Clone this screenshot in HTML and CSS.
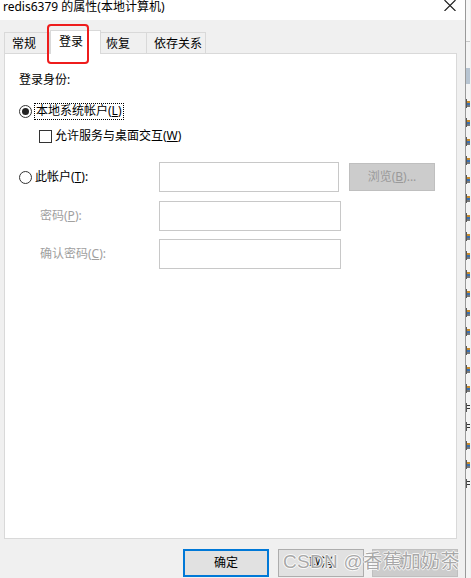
FILE: index.html
```html
<!DOCTYPE html>
<html lang="zh-CN">
<head>
<meta charset="utf-8">
<title>redis6379 的属性(本地计算机)</title>
<link rel="stylesheet" href="styles.css">
</head>
<body>
<div class="screen">
  <div class="dialog">
    <div class="titlebar">
      <span class="title">redis6379 的属性(本地计算机)</span>
      <svg class="close" width="12" height="11" viewBox="0 0 12 11"><path d="M0.5 0 L11.5 11 M11.5 0 L0.5 11" stroke="#1a1a1a" stroke-width="1.1" fill="none"/></svg>
    </div>
    <div class="body">
      <div class="tabs">
        <div class="tab tab-general">常规</div>
        <div class="tab tab-login active">登录</div>
        <div class="tab tab-recover">恢复</div>
        <div class="tab tab-deps">依存关系</div>
      </div>
      <div class="panel">
        <div class="heading">登录身份:</div>
        <div class="opt-row">
          <span class="radio checked"><span class="dot"></span></span>
          <span class="focus-label"><span>本地系统帐户(<u>L</u>)</span></span>
        </div>
        <div class="check-row">
          <span class="checkbox"></span>
          <span>允许服务与桌面交互(<u>W</u>)</span>
        </div>
        <div class="field-row first">
          <div class="field-label">
            <span class="radio"></span>
            <span>此帐户(<u>T</u>):</span>
          </div>
          <div class="input input-short"></div>
          <div class="browse"><span>浏览(<u>B</u>)...</span></div>
        </div>
        <div class="field-row second">
          <div class="field-label disabled indent"><span>密码(<u>P</u>):</span></div>
          <div class="input"></div>
        </div>
        <div class="field-row third">
          <div class="field-label disabled indent"><span>确认密码(<u>C</u>):</span></div>
          <div class="input"></div>
        </div>
      </div>
      <div class="buttons">
        <div class="btn btn-default">确定</div>
        <div class="btn btn-cancel">取消</div>
        <div class="btn btn-disabled"><span>应用(<u>A</u>)</span></div>
      </div>
    </div>
    <div class="annot"></div>
    <div class="watermark">CSDN @香蕉加奶茶</div>
  </div>
  <div class="strip">
    <div class="strip-top"></div>
    <div class="strip-band"></div>
    <div class="strip-list">
      <span class="mark"></span><span class="mark"></span><span class="mark"></span><span class="mark"></span>
      <span class="mark"></span><span class="mark"></span><span class="mark"></span><span class="mark"></span>
      <span class="mark"></span><span class="mark"></span><span class="mark"></span><span class="mark"></span>
      <span class="mark"></span><span class="mark"></span><span class="mark"></span><span class="mark"></span>
      <span class="mark alt"></span><span class="mark alt"></span><span class="mark"></span><span class="mark"></span>
      <span class="mark alt"></span>
    </div>
  </div>
</div>
</body>
</html>
```
FILE: styles.css
```css
* { box-sizing: border-box; }

html, body {
  margin: 0;
  padding: 0;
  width: 471px;
  height: 578px;
  overflow: hidden;
  background: #f0f0f0;
}

body {
  font-family: "Noto Sans", "Noto Sans CJK SC", sans-serif;
  font-size: 12px;
  color: #000;
}

u { text-decoration: underline; text-underline-offset: 1px; }

.screen {
  display: flex;
  width: 471px;
  height: 578px;
}

.dialog {
  position: relative;
  width: 466px;
  height: 578px;
  display: flex;
  flex-direction: column;
  background: #f0f0f0;
  border-right: 1px solid #9a9a9a;
}

.titlebar {
  height: 20px;
  background: #fff;
  display: flex;
  justify-content: space-between;
  align-items: flex-start;
  padding-left: 3px;
  padding-right: 9px;
}

.title {
  font-size: 12px;
  line-height: 14px;
  margin-top: 0;
  color: #000;
}

.close { display: block; margin-top: 0; }

.body {
  flex: 1;
  display: flex;
  flex-direction: column;
  padding: 10px 7px 0 4px;
}

.tabs {
  display: flex;
  align-items: flex-end;
  height: 23px;
  position: relative;
  z-index: 2;
}

.tab {
  height: 21px;
  border: 1px solid #d9d9d9;
  border-bottom: none;
  background: #f0f0f0;
  line-height: 16px;
  padding-top: 3px;
  white-space: nowrap;
}

.tab + .tab { border-left: none; }

.tab-general { width: 46px; padding-left: 7px; }
.tab-login { width: 51px; padding-left: 8px; }
.tab-recover { width: 46px; padding-left: 5px; }
.tab-deps { width: 59px; padding-left: 7px; }

.tab.active {
  height: 24px;
  margin-bottom: -1px;
  background: #fff;
  padding-top: 3px;
  border-left: 1px solid #d9d9d9;
}

.tab.active + .tab { border-left: none; }

.panel {
  height: 486px;
  width: 453px;
  background: #fff;
  border: 1px solid #d9d9d9;
  padding: 18px 0 0 14px;
  display: flex;
  flex-direction: column;
}

.heading {
  line-height: 16px;
}

.opt-row {
  margin-top: 14px;
  height: 18px;
  display: flex;
  align-items: center;
  gap: 2px;
}

.radio {
  width: 13px;
  height: 13px;
  border: 1px solid #333;
  border-radius: 50%;
  display: inline-flex;
  align-items: center;
  justify-content: center;
  background: #fff;
  flex: none;
}

.radio .dot {
  width: 7px;
  height: 7px;
  border-radius: 50%;
  background: #222;
}

.focus-label {
  border: 1px dotted #000;
  line-height: 14px;
  padding: 0 1px;
  height: 17px;
  display: inline-flex;
  align-items: center;
}

.check-row {
  margin-top: 8px;
  height: 16px;
  display: flex;
  align-items: center;
  gap: 3px;
  padding-left: 20px;
  line-height: 16px;
}

.checkbox {
  width: 13px;
  height: 13px;
  border: 1px solid #333;
  background: #fff;
  flex: none;
}

.field-row {
  display: flex;
  align-items: center;
  height: 30px;
}

.field-row.first { margin-top: 18px; }
.field-row.second { margin-top: 9px; }
.field-row.third { margin-top: 8px; }

.field-label {
  width: 140px;
  display: flex;
  align-items: center;
  gap: 3px;
  line-height: 16px;
  flex: none;
}

.field-label.indent { padding-left: 21px; }
.field-label.disabled { color: #a0a0a0; }

.input {
  width: 182px;
  height: 30px;
  border: 1px solid #c8c8c8;
  background: #fff;
  flex: none;
}

.input.input-short { width: 180px; }

.browse {
  margin-left: 10px;
  width: 86px;
  height: 28px;
  background: #cccccc;
  border: 1px solid #bfbfbf;
  color: #9a9a9a;
  display: flex;
  align-items: center;
  justify-content: center;
  line-height: 16px;
}

.buttons {
  display: flex;
  justify-content: flex-end;
  margin-top: 10px;
}

.btn {
  width: 86px;
  height: 28px;
  display: flex;
  align-items: center;
  justify-content: center;
  background: #e1e1e1;
  border: 1px solid #adadad;
  line-height: 16px;
}

.btn-default {
  border: 2px solid #0078d7;
  margin-right: 9px;
}

.btn-cancel { margin-right: 8px; }

.btn-disabled {
  background: #cccccc;
  border-color: #bfbfbf;
  color: #a0a0a0;
}

.annot {
  position: absolute;
  left: 47px;
  top: 24px;
  width: 42px;
  height: 40px;
  border: 2px solid #ee1c1c;
  border-radius: 4px;
  z-index: 5;
}

.watermark {
  position: absolute;
  left: 283px;
  top: 549px;
  font-family: "Liberation Sans", "Noto Sans CJK SC", sans-serif;
  font-size: 19px;
  line-height: 26px;
  color: rgba(140, 140, 140, 0.75);
  letter-spacing: 0.3px;
  text-shadow: 1px 0 0 rgba(255,255,255,0.8), -1px 0 0 rgba(255,255,255,0.8), 0 1px 0 rgba(255,255,255,0.8), 0 -1px 0 rgba(255,255,255,0.8);
  white-space: nowrap;
  z-index: 6;
}

.strip {
  width: 4px;
  height: 578px;
  background: #f4f4f4;
  display: flex;
  flex-direction: column;
  overflow: hidden;
}

.strip-top {
  height: 42px;
  border-bottom: 1px solid #c8c8c8;
  background: #f7f7f7;
}

.strip-band {
  margin-top: 26px;
  height: 16px;
  background: #b7c4d1;
}

.strip-list {
  display: flex;
  flex-direction: column;
  gap: 10px;
  padding-top: 15px;
}

.mark {
  display: block;
  width: 4px;
  height: 9px;
  border-left: 1px solid #555;
  background: linear-gradient(to bottom, #f4f4f4 0 2px, #c88a2a 2px 4px, #3a6fb0 4px 6px, #777 6px 8px, #f4f4f4 8px 9px);
}

.mark.alt {
  background: linear-gradient(to bottom, #f4f4f4 0 2px, #333 2px 3px, #f4f4f4 3px 5px, #333 5px 6px, #f4f4f4 6px 9px);
}
```
